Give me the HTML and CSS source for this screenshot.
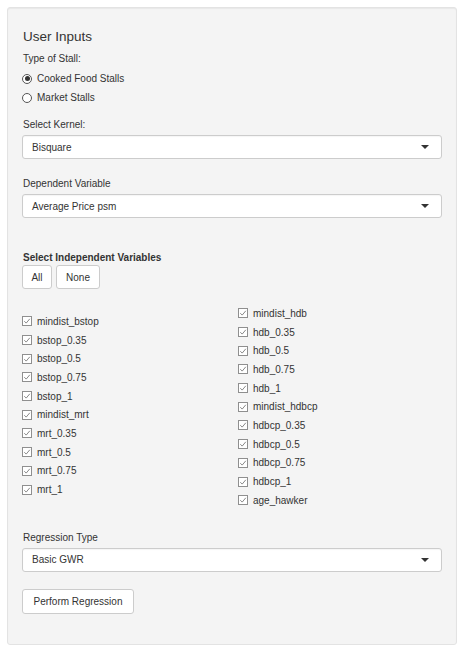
FILE: index.html
```html
<!DOCTYPE html>
<html>
<head>
<meta charset="utf-8">
<link rel="stylesheet" href="styles.css">
</head>
<body>
<div class="well">
  <h4 class="title">User Inputs</h4>

  <div class="label">Type of Stall:</div>
  <div class="radios">
    <div class="radio"><span class="rcircle on"></span>Cooked Food Stalls</div>
    <div class="radio"><span class="rcircle"></span>Market Stalls</div>
  </div>

  <div class="label gap-kernel">Select Kernel:</div>
  <div class="select"><span>Bisquare</span><span class="caret"></span></div>

  <div class="label gap-dep">Dependent Variable</div>
  <div class="select"><span>Average Price psm</span><span class="caret"></span></div>

  <div class="label bold gap-indep">Select Independent Variables</div>
  <div class="btnrow">
    <button class="btn btn-all">All</button>
    <button class="btn btn-none">None</button>
  </div>

  <div class="checkgrid">
    <div class="col col-left">
      <div class="chk"><svg class="box" viewBox="0 0 10 10"><rect x="0.5" y="0.5" width="9" height="9" fill="#fff" stroke="#8f8f8f"/><path d="M2.3 5.2 L4.2 7.1 L7.8 2.8" fill="none" stroke="#7a7a7a" stroke-width="0.9"/></svg>mindist_bstop</div>
      <div class="chk"><svg class="box" viewBox="0 0 10 10"><rect x="0.5" y="0.5" width="9" height="9" fill="#fff" stroke="#8f8f8f"/><path d="M2.3 5.2 L4.2 7.1 L7.8 2.8" fill="none" stroke="#7a7a7a" stroke-width="0.9"/></svg>bstop_0.35</div>
      <div class="chk"><svg class="box" viewBox="0 0 10 10"><rect x="0.5" y="0.5" width="9" height="9" fill="#fff" stroke="#8f8f8f"/><path d="M2.3 5.2 L4.2 7.1 L7.8 2.8" fill="none" stroke="#7a7a7a" stroke-width="0.9"/></svg>bstop_0.5</div>
      <div class="chk"><svg class="box" viewBox="0 0 10 10"><rect x="0.5" y="0.5" width="9" height="9" fill="#fff" stroke="#8f8f8f"/><path d="M2.3 5.2 L4.2 7.1 L7.8 2.8" fill="none" stroke="#7a7a7a" stroke-width="0.9"/></svg>bstop_0.75</div>
      <div class="chk"><svg class="box" viewBox="0 0 10 10"><rect x="0.5" y="0.5" width="9" height="9" fill="#fff" stroke="#8f8f8f"/><path d="M2.3 5.2 L4.2 7.1 L7.8 2.8" fill="none" stroke="#7a7a7a" stroke-width="0.9"/></svg>bstop_1</div>
      <div class="chk"><svg class="box" viewBox="0 0 10 10"><rect x="0.5" y="0.5" width="9" height="9" fill="#fff" stroke="#8f8f8f"/><path d="M2.3 5.2 L4.2 7.1 L7.8 2.8" fill="none" stroke="#7a7a7a" stroke-width="0.9"/></svg>mindist_mrt</div>
      <div class="chk"><svg class="box" viewBox="0 0 10 10"><rect x="0.5" y="0.5" width="9" height="9" fill="#fff" stroke="#8f8f8f"/><path d="M2.3 5.2 L4.2 7.1 L7.8 2.8" fill="none" stroke="#7a7a7a" stroke-width="0.9"/></svg>mrt_0.35</div>
      <div class="chk"><svg class="box" viewBox="0 0 10 10"><rect x="0.5" y="0.5" width="9" height="9" fill="#fff" stroke="#8f8f8f"/><path d="M2.3 5.2 L4.2 7.1 L7.8 2.8" fill="none" stroke="#7a7a7a" stroke-width="0.9"/></svg>mrt_0.5</div>
      <div class="chk"><svg class="box" viewBox="0 0 10 10"><rect x="0.5" y="0.5" width="9" height="9" fill="#fff" stroke="#8f8f8f"/><path d="M2.3 5.2 L4.2 7.1 L7.8 2.8" fill="none" stroke="#7a7a7a" stroke-width="0.9"/></svg>mrt_0.75</div>
      <div class="chk"><svg class="box" viewBox="0 0 10 10"><rect x="0.5" y="0.5" width="9" height="9" fill="#fff" stroke="#8f8f8f"/><path d="M2.3 5.2 L4.2 7.1 L7.8 2.8" fill="none" stroke="#7a7a7a" stroke-width="0.9"/></svg>mrt_1</div>
    </div>
    <div class="col col-right">
      <div class="chk"><svg class="box" viewBox="0 0 10 10"><rect x="0.5" y="0.5" width="9" height="9" fill="#fff" stroke="#8f8f8f"/><path d="M2.3 5.2 L4.2 7.1 L7.8 2.8" fill="none" stroke="#7a7a7a" stroke-width="0.9"/></svg>mindist_hdb</div>
      <div class="chk"><svg class="box" viewBox="0 0 10 10"><rect x="0.5" y="0.5" width="9" height="9" fill="#fff" stroke="#8f8f8f"/><path d="M2.3 5.2 L4.2 7.1 L7.8 2.8" fill="none" stroke="#7a7a7a" stroke-width="0.9"/></svg>hdb_0.35</div>
      <div class="chk"><svg class="box" viewBox="0 0 10 10"><rect x="0.5" y="0.5" width="9" height="9" fill="#fff" stroke="#8f8f8f"/><path d="M2.3 5.2 L4.2 7.1 L7.8 2.8" fill="none" stroke="#7a7a7a" stroke-width="0.9"/></svg>hdb_0.5</div>
      <div class="chk"><svg class="box" viewBox="0 0 10 10"><rect x="0.5" y="0.5" width="9" height="9" fill="#fff" stroke="#8f8f8f"/><path d="M2.3 5.2 L4.2 7.1 L7.8 2.8" fill="none" stroke="#7a7a7a" stroke-width="0.9"/></svg>hdb_0.75</div>
      <div class="chk"><svg class="box" viewBox="0 0 10 10"><rect x="0.5" y="0.5" width="9" height="9" fill="#fff" stroke="#8f8f8f"/><path d="M2.3 5.2 L4.2 7.1 L7.8 2.8" fill="none" stroke="#7a7a7a" stroke-width="0.9"/></svg>hdb_1</div>
      <div class="chk"><svg class="box" viewBox="0 0 10 10"><rect x="0.5" y="0.5" width="9" height="9" fill="#fff" stroke="#8f8f8f"/><path d="M2.3 5.2 L4.2 7.1 L7.8 2.8" fill="none" stroke="#7a7a7a" stroke-width="0.9"/></svg>mindist_hdbcp</div>
      <div class="chk"><svg class="box" viewBox="0 0 10 10"><rect x="0.5" y="0.5" width="9" height="9" fill="#fff" stroke="#8f8f8f"/><path d="M2.3 5.2 L4.2 7.1 L7.8 2.8" fill="none" stroke="#7a7a7a" stroke-width="0.9"/></svg>hdbcp_0.35</div>
      <div class="chk"><svg class="box" viewBox="0 0 10 10"><rect x="0.5" y="0.5" width="9" height="9" fill="#fff" stroke="#8f8f8f"/><path d="M2.3 5.2 L4.2 7.1 L7.8 2.8" fill="none" stroke="#7a7a7a" stroke-width="0.9"/></svg>hdbcp_0.5</div>
      <div class="chk"><svg class="box" viewBox="0 0 10 10"><rect x="0.5" y="0.5" width="9" height="9" fill="#fff" stroke="#8f8f8f"/><path d="M2.3 5.2 L4.2 7.1 L7.8 2.8" fill="none" stroke="#7a7a7a" stroke-width="0.9"/></svg>hdbcp_0.75</div>
      <div class="chk"><svg class="box" viewBox="0 0 10 10"><rect x="0.5" y="0.5" width="9" height="9" fill="#fff" stroke="#8f8f8f"/><path d="M2.3 5.2 L4.2 7.1 L7.8 2.8" fill="none" stroke="#7a7a7a" stroke-width="0.9"/></svg>hdbcp_1</div>
      <div class="chk"><svg class="box" viewBox="0 0 10 10"><rect x="0.5" y="0.5" width="9" height="9" fill="#fff" stroke="#8f8f8f"/><path d="M2.3 5.2 L4.2 7.1 L7.8 2.8" fill="none" stroke="#7a7a7a" stroke-width="0.9"/></svg>age_hawker</div>
    </div>
  </div>

  <div class="label gap-reg">Regression Type</div>
  <div class="select"><span>Basic GWR</span><span class="caret"></span></div>

  <button class="btn btn-perform">Perform Regression</button>
</div>
</body>
</html>
```

FILE: styles.css
```css
html, body {
  margin: 0;
  padding: 0;
  background: #ffffff;
}
body {
  padding: 7px 8px 0 7px;
  font-family: "Liberation Sans", Arial, sans-serif;
  font-size: 10px;
  color: #333333;
}
.well {
  width: 420px;
  height: 608px;
  padding: 14px 14px 14px 14px;
  background: #f4f4f4;
  border: 1px solid #e3e3e3;
  border-radius: 3px;
  box-shadow: inset 0 1px 1px rgba(0,0,0,0.05);
}
.title {
  margin: 8px 0 8px 1px;
  font-size: 13.5px;
  font-weight: normal;
  line-height: 14px;
  color: #333;
}
.label {
  line-height: 14px;
  font-size: 10px;
  margin-left: 1px;
  margin-bottom: 3px;
}
.bold {
  font-weight: bold;
  margin-bottom: 0;
}
.radios {
  display: flex;
  flex-direction: column;
}
.radio {
  display: flex;
  align-items: center;
  height: 19px;
  font-size: 10px;
}
.rcircle {
  width: 8px;
  height: 8px;
  border: 1px solid #555;
  border-radius: 50%;
  background: #fff;
  margin: 0 5px 0 0;
  display: flex;
  align-items: center;
  justify-content: center;
}
.rcircle.on::after {
  content: "";
  width: 5px;
  height: 5px;
  border-radius: 50%;
  background: #333;
}
.gap-kernel { margin-top: 11px; }
.gap-dep { margin-top: 18px; }
.gap-indep { margin-top: 33px; }
.gap-reg { margin-top: 21px; }
.select {
  height: 22px;
  border: 1px solid #cccccc;
  border-radius: 3px;
  background: #ffffff;
  display: flex;
  align-items: center;
  justify-content: space-between;
  padding: 0 12px 0 9px;
  font-size: 10px;
  color: #333;
  box-shadow: inset 0 1px 1px rgba(0,0,0,0.04);
}
.caret {
  width: 0;
  height: 0;
  border-left: 4px solid transparent;
  border-right: 4px solid transparent;
  border-top: 4.5px solid #333;
}
.btnrow {
  display: flex;
  gap: 4px;
}
.btn {
  font-family: "Liberation Sans", Arial, sans-serif;
  font-size: 10px;
  color: #333;
  background: #ffffff;
  border: 1px solid #cccccc;
  border-radius: 3px;
  height: 24px;
  padding: 0;
  display: flex;
  align-items: center;
  justify-content: center;
}
.btn-all { width: 30px; }
.btn-none { width: 44px; }
.checkgrid {
  display: grid;
  grid-template-columns: 216px 1fr;
  margin-top: 15px;
}
.col {
  display: flex;
  flex-direction: column;
}
.col-left { margin-top: 8px; }
.chk {
  display: flex;
  align-items: center;
  height: 18.7px;
  font-size: 10px;
}
.box {
  width: 10px;
  height: 10px;
  margin-right: 5px;
  flex: none;
}
.btn-perform {
  margin-top: 17px;
  width: 112px;
  height: 25px;
}
```
